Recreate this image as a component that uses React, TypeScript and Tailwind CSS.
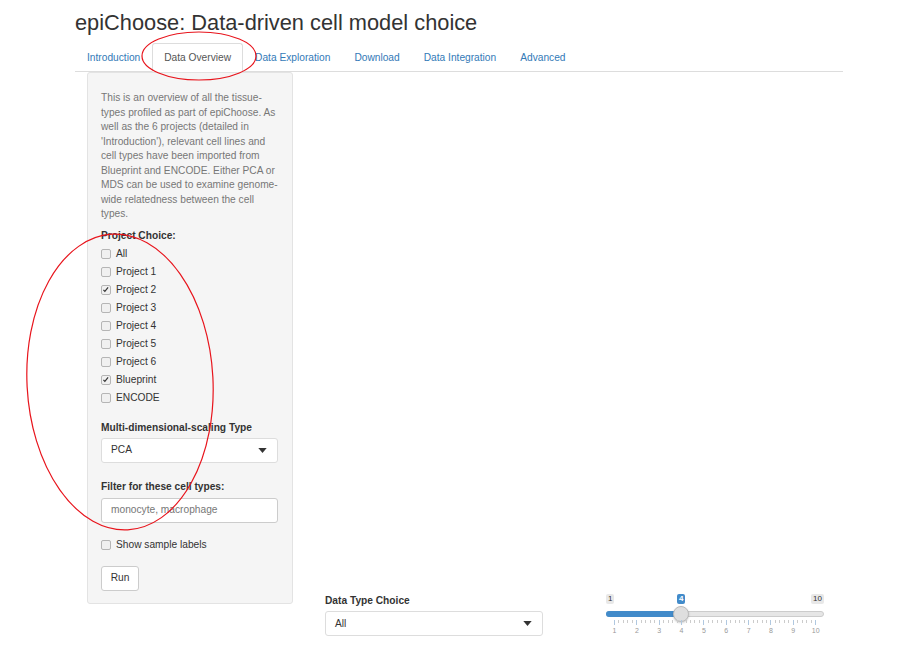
import React from "react";

const Check = ({ checked }: { checked?: boolean }) => (
  <span className="relative inline-block w-[10px] h-[10px] rounded-[2px] border border-[#b5b5b5] bg-[#f0f0f0] mr-[5px] shrink-0">
    {checked && (
      <svg viewBox="0 0 10 10" className="absolute left-[0px] top-[0px] w-[8px] h-[8px]">
        <path d="M1.8 4.8 L3.6 6.8 L7.6 1.8" stroke="#333" strokeWidth="1.5" fill="none" />
      </svg>
    )}
  </span>
);

const Caret = () => (
  <svg viewBox="0 0 10 6" className="w-[9px] h-[5px]">
    <path d="M0 0 L10 0 L5 6 Z" fill="#333" />
  </svg>
);

export default function App() {
  const projects: [string, boolean][] = [
    ["All", false],
    ["Project 1", false],
    ["Project 2", true],
    ["Project 3", false],
    ["Project 4", false],
    ["Project 5", false],
    ["Project 6", false],
    ["Blueprint", true],
    ["ENCODE", false],
  ];
  const tabs = ["Introduction", "Data Overview", "Data Exploration", "Download", "Data Integration", "Advanced"];
  const ticks = Array.from({ length: 10 }, (_, i) => i + 1);
  return (
    <div className="relative w-[907px] h-[654px] bg-white text-[#333] overflow-hidden" style={{ fontFamily: '"Liberation Sans", Arial, sans-serif' }}>
      <div className="pl-[75px] w-[843px]">
        <h1 className="pt-[10px] h-[43px] text-[21.8px] leading-[26px] text-[#333]">epiChoose: Data-driven cell model choice</h1>
        <div className="flex border-b border-[#ddd] h-[29px]">
          {tabs.map((t, i) => (
            <div
              key={t}
              className={
                "px-[11px] h-[29px] text-[10.2px] leading-[27px] rounded-t-[3px] border " +
                (i === 1 ? "border-[#ddd] border-b-white bg-white text-[#555]" : "border-transparent text-[#337ab7]")
              }
            >
              {t}
            </div>
          ))}
        </div>
        <div className="flex">
          <div className="ml-[12px] w-[206px] h-[532px] bg-[#f5f5f5] border border-[#e3e3e3] rounded-[3px] px-[13px] pt-[18px] text-[10.2px] whitespace-nowrap">
            <div className="text-[#777] leading-[14.5px]">
              <div>This is an overview of all the tissue-</div>
              <div>types profiled as part of epiChoose. As</div>
              <div>well as the 6 projects (detailed in</div>
              <div>'Introduction'), relevant cell lines and</div>
              <div>cell types have been imported from</div>
              <div>Blueprint and ENCODE. Either PCA or</div>
              <div>MDS can be used to examine genome-</div>
              <div>wide relatedness between the cell</div>
              <div>types.</div>
            </div>
            <div className="mt-[7px] font-bold leading-[14px]">Project Choice:</div>
            <div className="mt-[2px]">
              {projects.map(([p, c]) => (
                <div key={p} className="flex items-center h-[18px]">
                  <Check checked={c} />
                  <span>{p}</span>
                </div>
              ))}
            </div>
            <div className="mt-[14px] font-bold leading-[14px]">Multi-dimensional-scaling Type</div>
            <div className="mt-[3px] w-[177px] h-[25px] bg-white border border-[#ddd] rounded-[3px] flex items-center justify-between pl-[9px] pr-[10px]">
              <span>PCA</span>
              <Caret />
            </div>
            <div className="mt-[17px] font-bold leading-[14px]">Filter for these cell types:</div>
            <div className="mt-[4px] w-[177px] h-[25px] bg-white border border-[#ccc] rounded-[3px] flex items-center pl-[9px] text-[#777]">
              monocyte, macrophage
            </div>
            <div className="mt-[13px] flex items-center h-[18px]">
              <Check />
              <span>Show sample labels</span>
            </div>
            <div className="mt-[12px] w-[38px] h-[25px] bg-white border border-[#ccc] rounded-[3px] flex items-center justify-center">Run</div>
          </div>
          <div className="flex-1 flex flex-col">
            <div className="h-[522px]" />
            <div className="flex pl-[32px] gap-[63px]">
              <div className="w-[218px] text-[10.2px]">
                <div className="font-bold leading-[14px]">Data Type Choice</div>
                <div className="mt-[3px] h-[25px] bg-white border border-[#ddd] rounded-[3px] flex items-center justify-between pl-[9px] pr-[10px]">
                  <span>All</span>
                  <Caret />
                </div>
              </div>
              <div className="w-[218px] relative h-[50px]">
                <span className="absolute left-[0px] top-[0px] bg-[#e8e8e8] rounded-[2px] px-[2px] text-[8px] leading-[10px] text-[#333]">1</span>
                <span className="absolute left-[71px] top-[0px] bg-[#428bca] rounded-[2px] px-[2px] text-[8px] leading-[10px] text-white font-bold">4</span>
                <span className="absolute right-[0px] top-[0px] bg-[#e8e8e8] rounded-[2px] px-[2px] text-[8px] leading-[10px] text-[#333]">10</span>
                <div className="absolute left-[0px] right-[0px] top-[17px] h-[6px] rounded-[3px] bg-[#e6e6e6] border border-[#ccc]" />
                <div className="absolute left-[0px] w-[76px] top-[17px] h-[6px] rounded-l-[3px] bg-[#428bca]" />
                <div className="absolute left-[67px] top-[12px] w-[16px] h-[16px] rounded-full bg-[#dedede] border border-[#bbb] shadow-[0_1px_2px_rgba(0,0,0,0.2)]" />
                {ticks.map((t, i) => (
                  <React.Fragment key={t}>
                    <div className="absolute top-[26px] w-[1px] h-[5px] bg-[#b0c8e0]" style={{ left: 8 + i * 22.35 }} />
                    <span className="absolute top-[33px] text-[7px] leading-[8px] text-[#999] -translate-x-1/2" style={{ left: 8.5 + i * 22.35 }}>
                      {t}
                    </span>
                    {i < 9 &&
                      [1, 2, 3, 4].map((m) => (
                        <div key={m} className="absolute top-[26px] w-[1px] h-[3px] bg-[#ccc]" style={{ left: 8 + i * 22.35 + m * 4.47 }} />
                      ))}
                  </React.Fragment>
                ))}
              </div>
            </div>
          </div>
        </div>
      </div>
      <svg className="absolute left-0 top-0 w-[907px] h-[654px] pointer-events-none" viewBox="0 0 907 654">
        <ellipse cx="199" cy="56" rx="57" ry="24" fill="none" stroke="#e8141c" strokeWidth="1.2" />
        <ellipse cx="120" cy="382" rx="93" ry="148" fill="none" stroke="#e8141c" strokeWidth="1.2" transform="rotate(-3 120 382)" />
      </svg>
    </div>
  );
}
